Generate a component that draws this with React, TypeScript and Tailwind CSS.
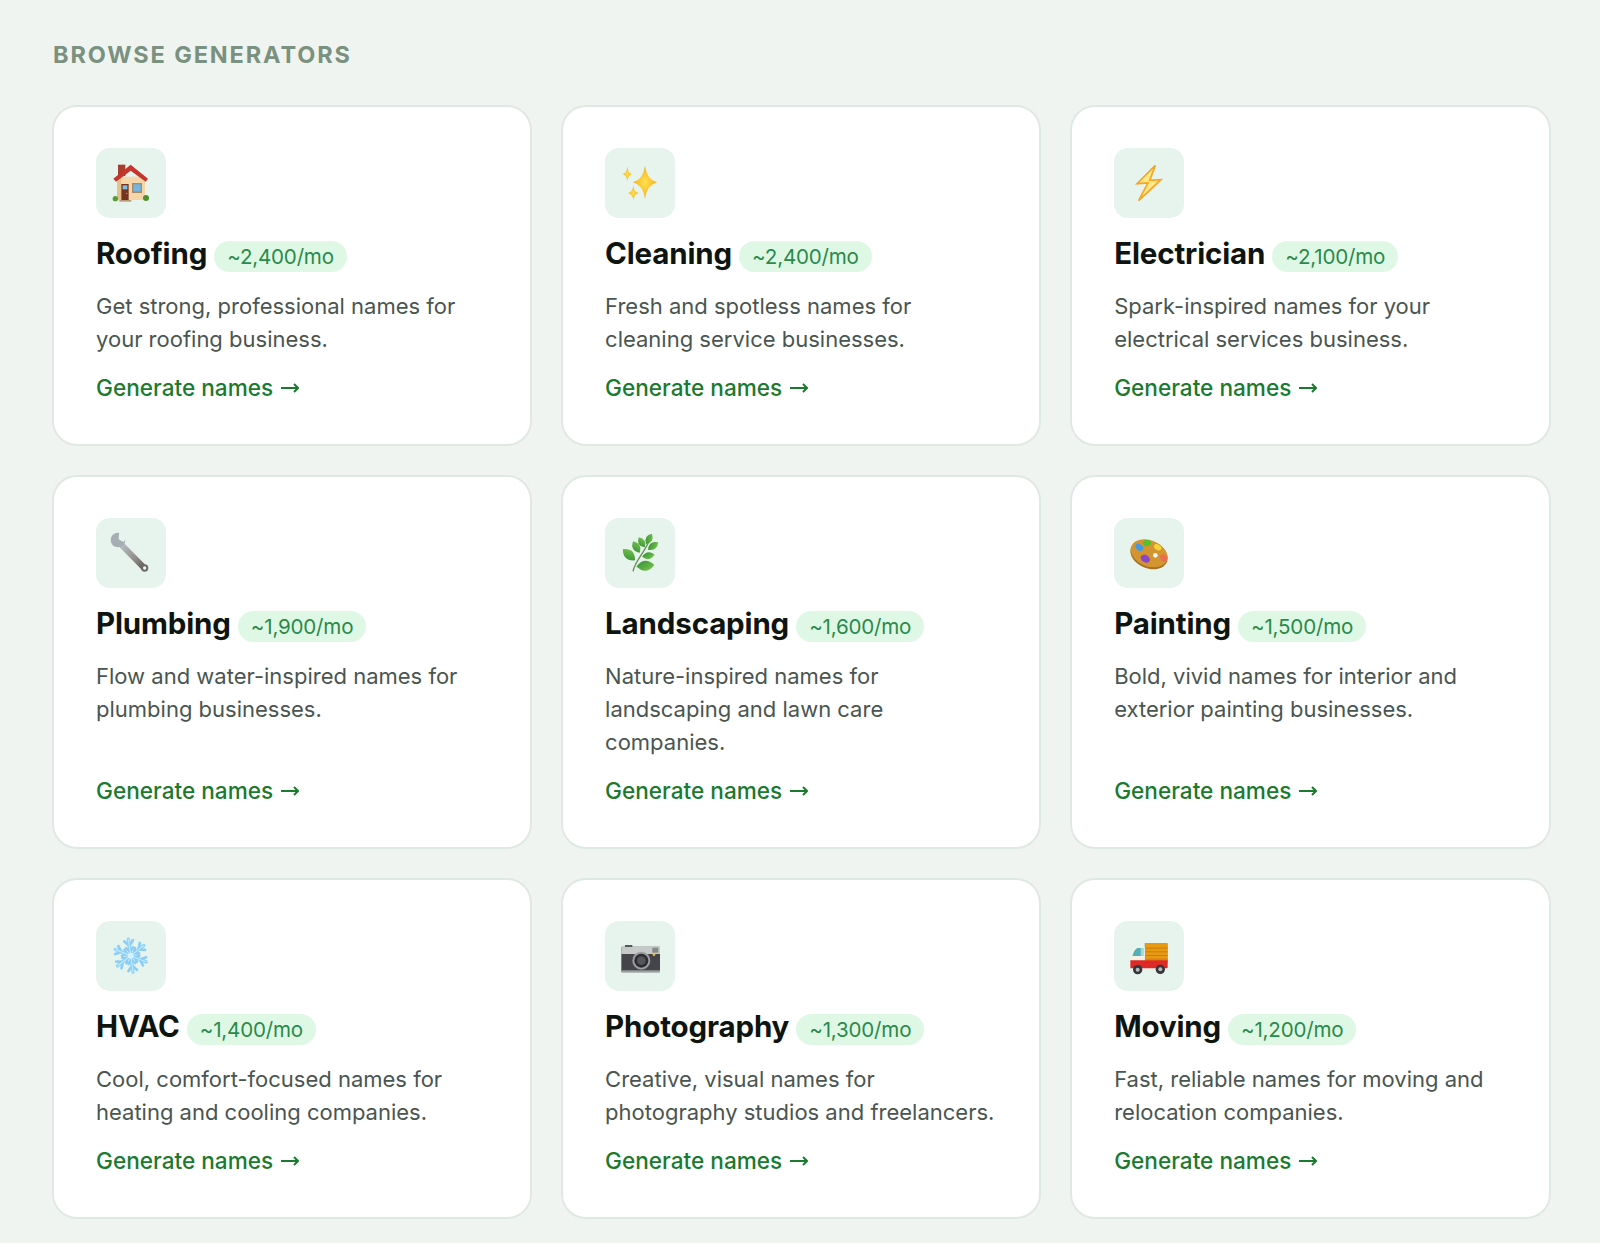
import type { ReactNode } from 'react';

const BOX = 'w-[70px] h-[70px]';

function Svg({ children }: { children: ReactNode }) {
  return (
    <svg viewBox="0 0 210 210" className={BOX}>
      {children}
    </svg>
  );
}

function star(cx: number, cy: number, rx: number, ry: number) {
  const a = rx * 0.16;
  const b = ry * 0.16;
  return `M${cx} ${cy - ry}Q${cx + a} ${cy - b} ${cx + rx} ${cy}Q${cx + a} ${cy + b} ${cx} ${cy + ry}Q${cx - a} ${cy + b} ${cx - rx} ${cy}Q${cx - a} ${cy - b} ${cx} ${cy - ry}Z`;
}

const HouseIcon = () => (
  <Svg>
    <rect x="66" y="50" width="22" height="34" fill="#a83a2e" />
    <rect x="63" y="86" width="84" height="70" fill="#f4d6a8" />
    <rect x="63" y="86" width="12" height="70" fill="#e8c08c" />
    <path d="M104 50L156 92L149 101L104 68L60 101L52 92Z" fill="#c5352c" />
    <rect x="76" y="108" width="22" height="50" fill="#74341f" />
    <rect x="80" y="112" width="14" height="12" fill="#7cc0e8" />
    <circle cx="92" cy="136" r="2" fill="#e8b94a" />
    <rect x="108" y="105" width="30" height="30" fill="#a58a6c" />
    <rect x="112" y="109" width="22" height="21" fill="#73b6e6" />
    <rect x="70" y="156" width="36" height="5" fill="#b59a7c" />
    <circle cx="58" cy="152" r="8" fill="#5a9a34" />
    <circle cx="150" cy="150" r="9" fill="#4f8f2e" />
  </Svg>
);

const SparkleIcon = () => (
  <Svg>
    <defs>
      <radialGradient id="spark">
        <stop offset="0" stopColor="#ffe14d" />
        <stop offset="1" stopColor="#f7ad1e" />
      </radialGradient>
    </defs>
    <path d={star(120, 103, 36, 50)} fill="url(#spark)" />
    <path d={star(67, 78, 14, 22)} fill="url(#spark)" />
    <path d={star(85, 135, 16, 22)} fill="url(#spark)" />
  </Svg>
);

const BoltIcon = () => (
  <Svg>
    <path d="M124 52L69 107L102 105L74 158L141 95L107 97Z" fill="#ffe88a" stroke="#f5a623" strokeWidth="5" strokeLinejoin="miter" />
  </Svg>
);

const WrenchIcon = () => (
  <Svg>
    <defs>
      <linearGradient id="steel" x1="0" y1="0" x2="1" y2="1">
        <stop offset="0" stopColor="#b4bcc1" />
        <stop offset="0.6" stopColor="#918d8b" />
        <stop offset="1" stopColor="#625d5b" />
      </linearGradient>
    </defs>
    <path d="M78 82L143 148" stroke="url(#steel)" strokeWidth="18" strokeLinecap="round" />
    <circle cx="66" cy="66" r="22" fill="#a6aeb4" />
    <path d="M68 64L70 36L100 52L82 72Z" fill="#e7f4ee" />
    <circle cx="146" cy="150" r="11" fill="#6f6a68" />
    <circle cx="146" cy="150" r="5" fill="#e7f4ee" />
  </Svg>
);

const leaves: [number, number, number, number][] = [
  [72, 110, 25, 43],
  [94, 87, 20, 60],
  [110, 73, 18, 60],
  [132, 63, 18, 120],
  [144, 84, 19, 145],
  [130, 113, 19, 170],
  [121, 143, 27, 175],
];

const LeafIcon = () => (
  <Svg>
    <defs>
      <linearGradient id="leaf" x1="0" y1="0" x2="1" y2="1">
        <stop offset="0" stopColor="#7fc74e" />
        <stop offset="1" stopColor="#2f8f35" />
      </linearGradient>
    </defs>
    <path d="M84 160C90 130 112 112 130 74" stroke="#6d8a55" strokeWidth="4" fill="none" />
    {leaves.map(([x, y, r, a]) => (
      <path
        key={`${x}-${y}`}
        transform={`translate(${x} ${y}) rotate(${a})`}
        d={`M${-r} 0Q0 ${-r * 1.1} ${r} 0Q0 ${r * 1.1} ${-r} 0Z`}
        fill="url(#leaf)"
      />
    ))}
  </Svg>
);

const PaletteIcon = () => (
  <Svg>
    <ellipse cx="105" cy="110" rx="58" ry="41" transform="rotate(22 105 110)" fill="#a66f1e" />
    <ellipse cx="105" cy="106" rx="57" ry="39" transform="rotate(22 105 106)" fill="#d2952f" />
    <circle cx="124" cy="112" r="7" fill="#f2f7f2" />
    <ellipse cx="76" cy="88" rx="13" ry="9" transform="rotate(40 76 88)" fill="#3f9bea" />
    <ellipse cx="99" cy="75" rx="12" ry="9" fill="#4fc22e" />
    <ellipse cx="131" cy="88" rx="12" ry="8" transform="rotate(30 131 88)" fill="#f5d43a" />
    <ellipse cx="149" cy="120" rx="12" ry="9" transform="rotate(50 149 120)" fill="#ee6a50" />
    <ellipse cx="94" cy="122" rx="15" ry="11" transform="rotate(30 94 122)" fill="#8a45c8" />
  </Svg>
);

const SnowIcon = () => (
  <Svg>
    <g transform="rotate(-8 104 104)" strokeLinecap="round" fill="none">
      {[0, 60, 120, 180, 240, 300].map((a) => (
        <g key={a} transform={`rotate(${a} 104 104)`}>
          <path d="M104 104V54" stroke="#93d3f7" strokeWidth="10" />
          <path d="M104 74L91 59M104 74L117 59M104 92L94 80M104 92L114 80" stroke="#8ccdf5" strokeWidth="8" />
          <path d="M104 104V56" stroke="#c8ecfc" strokeWidth="3" />
        </g>
      ))}
    </g>
    <circle cx="104" cy="104" r="9" fill="#d6f0fd" />
  </Svg>
);

const CameraIcon = () => (
  <Svg>
    <rect x="49" y="77" width="116" height="77" rx="3" fill="#44444a" />
    <rect x="49" y="77" width="116" height="22" fill="#c6c9c8" />
    <rect x="60" y="72" width="22" height="6" fill="#55585a" />
    <rect x="49" y="148" width="116" height="6" fill="#9ea1a1" />
    <rect x="142" y="80" width="18" height="15" fill="#85898a" />
    <circle cx="109" cy="119" r="27" fill="#9b9d9e" />
    <circle cx="109" cy="119" r="21" fill="#2d2d31" />
    <circle cx="109" cy="119" r="13" fill="#54565c" />
    <circle cx="147" cy="101" r="4" fill="#f2c230" />
  </Svg>
);

const TruckIcon = () => (
  <Svg>
    <rect x="92" y="66" width="69" height="60" fill="#9aa0a3" />
    <rect x="95" y="69" width="66" height="55" fill="#e89a12" />
    {[80, 91, 102, 113].map((y) => (
      <rect key={y} x="95" y={y} width="66" height="3" fill="#c97d0c" />
    ))}
    <path d="M92 78H68C58 82 52 98 50 112V124H92Z" fill="#f5f1e6" />
    <path d="M88 81V105H55C58 94 63 85 70 81Z" fill="#4fb0b8" />
    <rect x="80" y="81" width="8" height="24" fill="#a8d4d8" />
    <path d="M49 118H161V138C161 141 160 142 157 142H52C50 142 49 141 49 138Z" fill="#dd2a26" />
    <circle cx="71" cy="146" r="14" fill="#34363a" />
    <circle cx="71" cy="146" r="6" fill="#b6babd" />
    <circle cx="139" cy="145" r="14" fill="#34363a" />
    <circle cx="139" cy="145" r="6" fill="#b6babd" />
  </Svg>
);

const generators = [
  { name: 'Roofing', vol: '~2,400/mo', desc: 'Get strong, professional names for your roofing business.', icon: <HouseIcon /> },
  { name: 'Cleaning', vol: '~2,400/mo', desc: 'Fresh and spotless names for cleaning service businesses.', icon: <SparkleIcon /> },
  { name: 'Electrician', vol: '~2,100/mo', desc: 'Spark-inspired names for your electrical services business.', icon: <BoltIcon /> },
  { name: 'Plumbing', vol: '~1,900/mo', desc: 'Flow and water-inspired names for plumbing businesses.', icon: <WrenchIcon /> },
  { name: 'Landscaping', vol: '~1,600/mo', desc: 'Nature-inspired names for landscaping and lawn care companies.', icon: <LeafIcon /> },
  { name: 'Painting', vol: '~1,500/mo', desc: 'Bold, vivid names for interior and exterior painting businesses.', icon: <PaletteIcon /> },
  { name: 'HVAC', vol: '~1,400/mo', desc: 'Cool, comfort-focused names for heating and cooling companies.', icon: <SnowIcon /> },
  { name: 'Photography', vol: '~1,300/mo', desc: 'Creative, visual names for photography studios and freelancers.', icon: <CameraIcon /> },
  { name: 'Moving', vol: '~1,200/mo', desc: 'Fast, reliable names for moving and relocation companies.', icon: <TruckIcon /> },
];

function GeneratorCard({ g }: { g: (typeof generators)[number] }) {
  return (
    <div className="flex flex-col rounded-[25px] border-2 border-[#dfe9e3] bg-white pt-[41px] pr-[36px] pb-[41px] pl-[42px]">
      <div className={`${BOX} mb-[18px] rounded-[14px] bg-[#e7f4ee]`}>{g.icon}</div>
      <div className="flex h-[37px] items-baseline gap-[7px]">
        <h3 className="text-[29.5px] leading-[34px] font-bold tracking-[-0.005em] text-[#0e1410]">{g.name}</h3>
        <span className="rounded-full bg-[#dff8e6] px-[13px] text-[20.6px] leading-[31px] tracking-[-0.01em] text-[#2a8a4a]">{g.vol}</span>
      </div>
      <p className="mt-[17px] mb-[17px] text-[22px] leading-[33px] text-[#4a5550]">{g.desc}</p>
      <a className="mt-auto flex items-center gap-[8px] text-[22.6px] leading-[30px] font-medium text-[#1a7a2e]">
        Generate names
        <svg width="18" height="14" viewBox="0 0 18 14" fill="none" stroke="#1a7a2e" strokeWidth="2">
          <path d="M0 7H17M13 3L17 7L13 11" />
        </svg>
      </a>
    </div>
  );
}

export default function App() {
  return (
    <div className="min-h-screen bg-[#f0f4f0] pt-[42px] pr-[49.5px] pb-[25px] pl-[52px] font-['Inter',sans-serif]">
      <h2 className="mb-[38px] ml-[1px] text-[23.5px] leading-[25px] font-bold tracking-[0.08em] text-[#7a9180]">BROWSE GENERATORS</h2>
      <div className="grid grid-cols-3 gap-x-[28.75px] gap-y-[29px]">
        {generators.map((g) => (
          <GeneratorCard key={g.name} g={g} />
        ))}
      </div>
    </div>
  );
}
